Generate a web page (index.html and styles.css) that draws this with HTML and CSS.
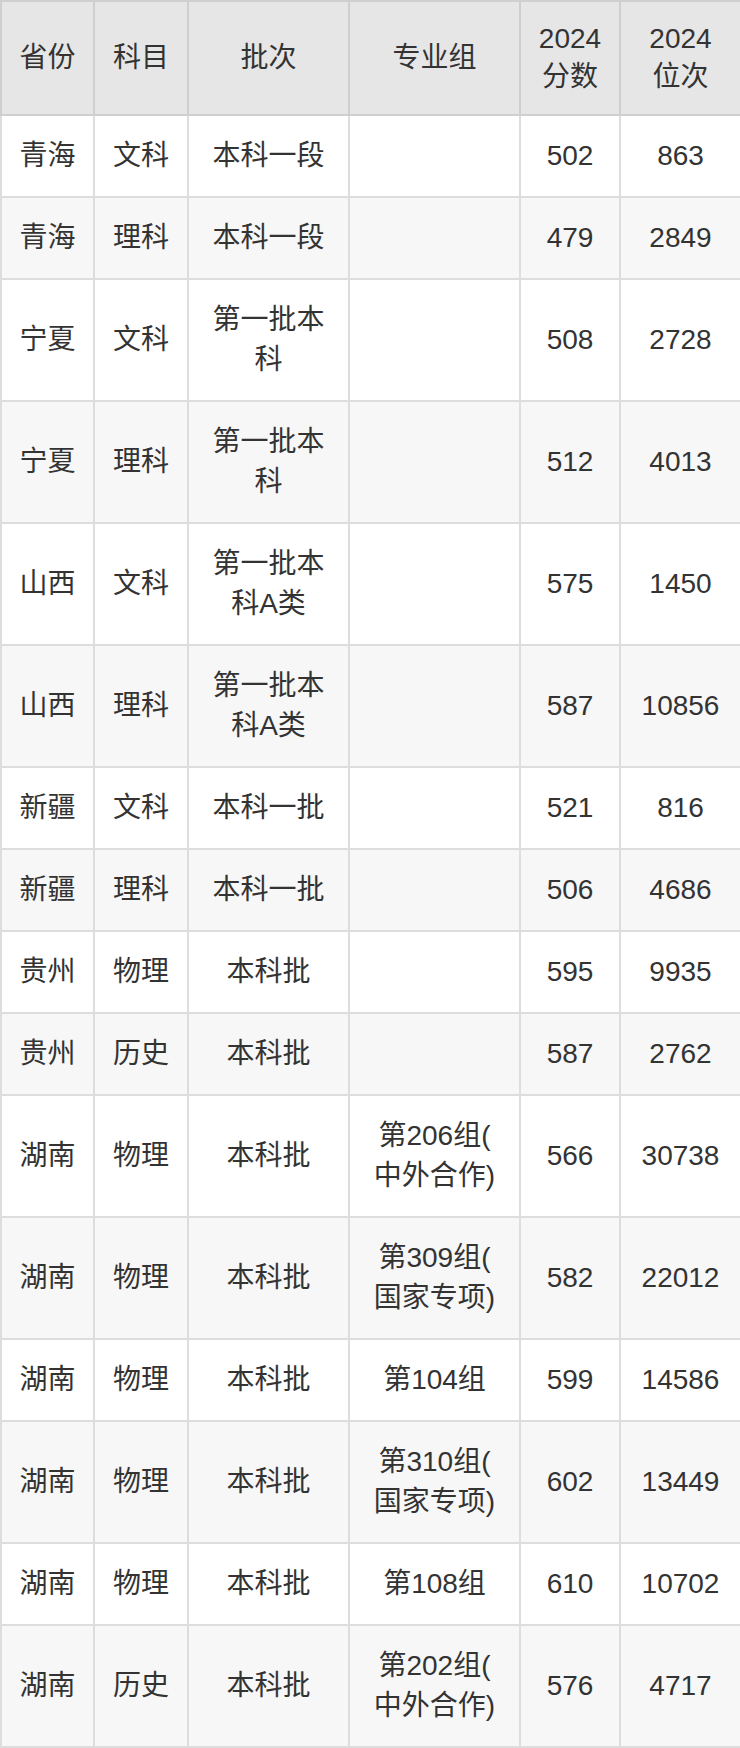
FILE: index.html
```html
<!DOCTYPE html>
<html lang="zh-CN">
<head>
<meta charset="utf-8">
<title>2024 分数位次</title>
<link rel="stylesheet" href="styles.css">
</head>
<body>
<table class="score-table">
  <colgroup>
    <col class="c1"><col class="c2"><col class="c3"><col class="c4"><col class="c5"><col class="c6">
  </colgroup>
  <thead>
    <tr><th>省份</th><th>科目</th><th>批次</th><th>专业组</th><th>2024分数</th><th>2024位次</th></tr>
  </thead>
  <tbody>
    <tr><td>青海</td><td>文科</td><td>本科一段</td><td></td><td>502</td><td>863</td></tr>
    <tr><td>青海</td><td>理科</td><td>本科一段</td><td></td><td>479</td><td>2849</td></tr>
    <tr><td>宁夏</td><td>文科</td><td>第一批本科</td><td></td><td>508</td><td>2728</td></tr>
    <tr><td>宁夏</td><td>理科</td><td>第一批本科</td><td></td><td>512</td><td>4013</td></tr>
    <tr><td>山西</td><td>文科</td><td>第一批本科A类</td><td></td><td>575</td><td>1450</td></tr>
    <tr><td>山西</td><td>理科</td><td>第一批本科A类</td><td></td><td>587</td><td>10856</td></tr>
    <tr><td>新疆</td><td>文科</td><td>本科一批</td><td></td><td>521</td><td>816</td></tr>
    <tr><td>新疆</td><td>理科</td><td>本科一批</td><td></td><td>506</td><td>4686</td></tr>
    <tr><td>贵州</td><td>物理</td><td>本科批</td><td></td><td>595</td><td>9935</td></tr>
    <tr><td>贵州</td><td>历史</td><td>本科批</td><td></td><td>587</td><td>2762</td></tr>
    <tr><td>湖南</td><td>物理</td><td>本科批</td><td>第206组(中外合作)</td><td>566</td><td>30738</td></tr>
    <tr><td>湖南</td><td>物理</td><td>本科批</td><td>第309组(国家专项)</td><td>582</td><td>22012</td></tr>
    <tr><td>湖南</td><td>物理</td><td>本科批</td><td>第104组</td><td>599</td><td>14586</td></tr>
    <tr><td>湖南</td><td>物理</td><td>本科批</td><td>第310组(国家专项)</td><td>602</td><td>13449</td></tr>
    <tr><td>湖南</td><td>物理</td><td>本科批</td><td>第108组</td><td>610</td><td>10702</td></tr>
    <tr><td>湖南</td><td>历史</td><td>本科批</td><td>第202组(中外合作)</td><td>576</td><td>4717</td></tr>
  </tbody>
</table>
</body>
</html>
```
FILE: styles.css
```css
html, body {
  margin: 0;
  padding: 0;
  background: #ffffff;
}

.score-table {
  width: 740px;
  table-layout: fixed;
  border-collapse: collapse;
  font-family: "Liberation Sans", "Noto Sans CJK SC", sans-serif;
  font-size: 28px;
  color: #333333;
}

.c1 { width: 93px; }
.c2 { width: 94px; }
.c3 { width: 161px; }
.c4 { width: 171px; }
.c5 { width: 100px; }
.c6 { width: 121px; }

.score-table th,
.score-table td {
  text-align: center;
  vertical-align: middle;
  line-break: anywhere;
}

.score-table th {
  background: #e6e6e6;
  border: 2px solid #cfcfcf;
  font-weight: normal;
  line-height: 38px;
  padding: 18px 16px;
}

.score-table td {
  border: 2px solid #dddddd;
  line-height: 40px;
  padding: 20px 16px;
}

.score-table tbody tr:nth-child(even) td {
  background: #f7f7f7;
}
```
